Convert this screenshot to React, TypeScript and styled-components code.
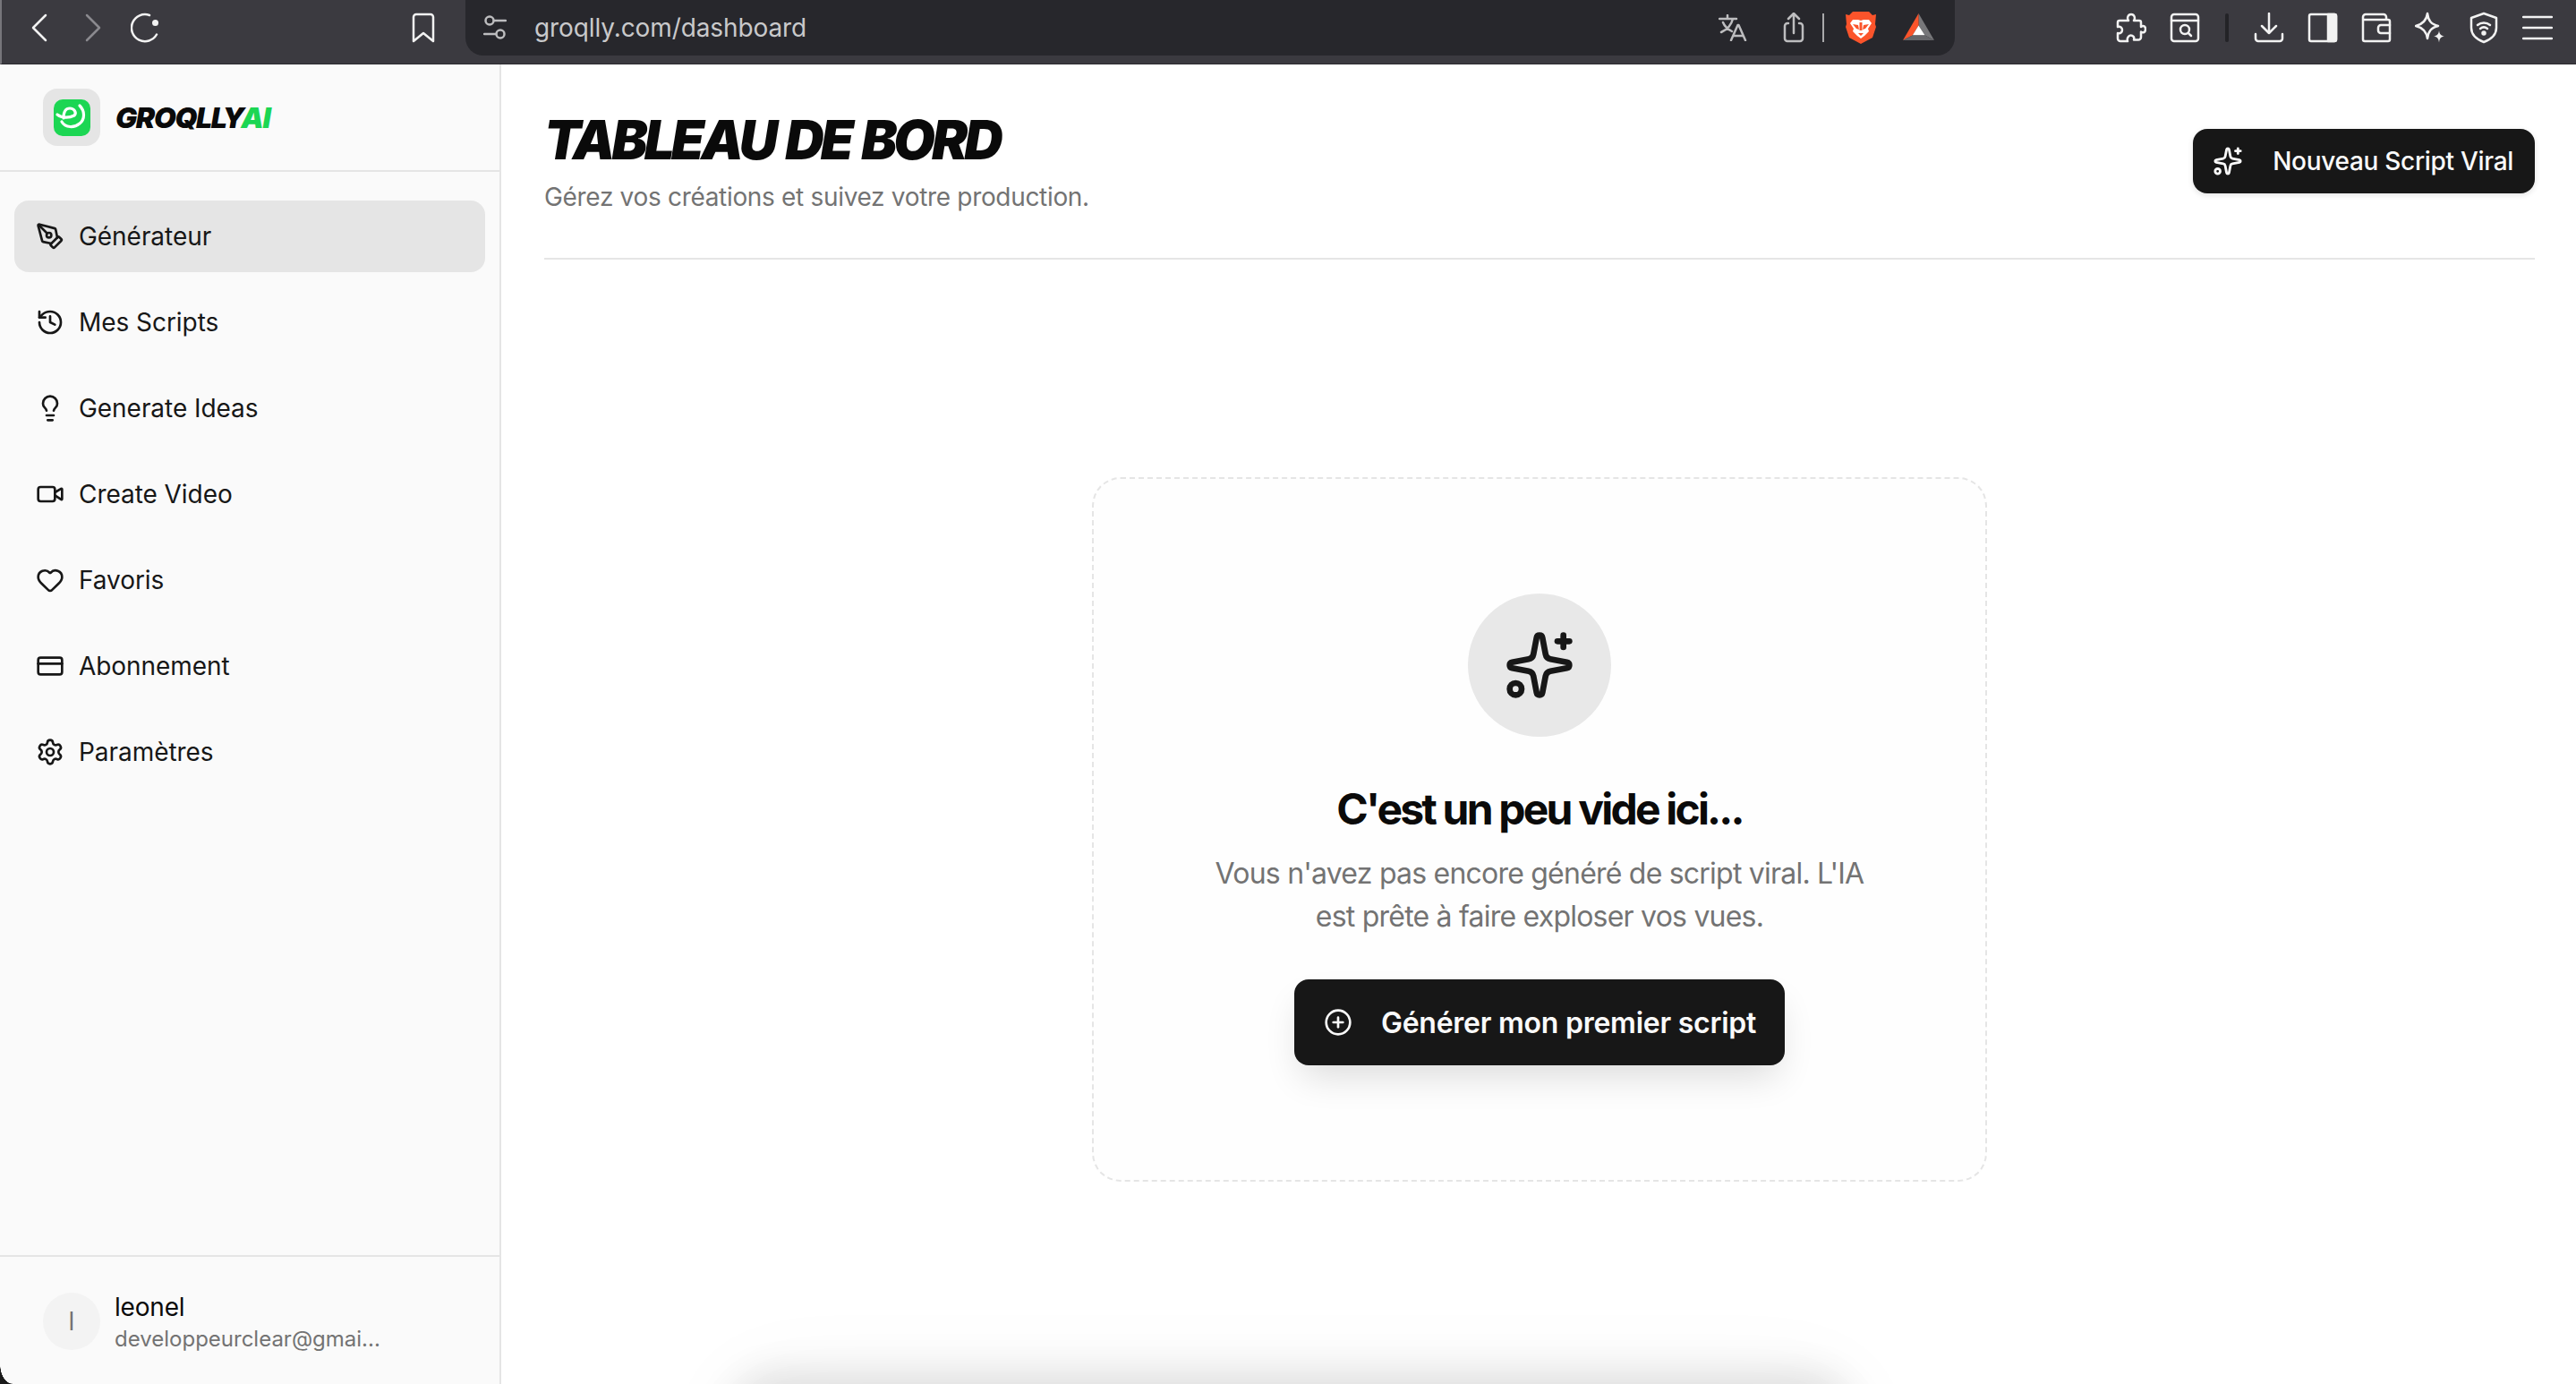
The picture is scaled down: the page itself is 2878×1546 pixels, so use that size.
import React, { FC } from 'react';
import styled, { createGlobalStyle } from 'styled-components';
import { CirclePlus, CreditCard, Heart, History, Lightbulb, PenTool, Settings, Sparkles, Video } from 'lucide-react';

const GlobalStyle = createGlobalStyle`
	html,
	body {
		margin: 0;
		padding: 0;
		background: #fff;
	}
	* {
		box-sizing: border-box;
	}
`;

const NAV_ITEMS = [
	{ label: 'Générateur', Icon: PenTool, active: true },
	{ label: 'Mes Scripts', Icon: History },
	{ label: 'Generate Ideas', Icon: Lightbulb },
	{ label: 'Create Video', Icon: Video },
	{ label: 'Favoris', Icon: Heart },
	{ label: 'Abonnement', Icon: CreditCard },
	{ label: 'Paramètres', Icon: Settings },
];

const App: FC = () => (
	<Page>
		<GlobalStyle />

		<BrowserBar>
			<HistoryControls>
				<ChromeSlot $w={64}>
					<ChromeIcon width='20' height='32' viewBox='0 0 20 32'>
						<path d='M17 2 3 16l14 14' />
					</ChromeIcon>
				</ChromeSlot>
				<ChromeSlot $w={56}>
					<ChromeIcon width='20' height='32' viewBox='0 0 20 32' $dim>
						<path d='m3 2 14 14L3 30' />
					</ChromeIcon>
				</ChromeSlot>
				<ChromeSlot $w={62}>
					<ChromeIcon width='34' height='34' viewBox='0 0 34 34'>
						<path d='M29 24.5A15 15 0 1 1 21 3' />
						<circle cx='27.5' cy='11.5' r='3.5' fill='#f2f2f2' stroke='none' />
					</ChromeIcon>
				</ChromeSlot>
			</HistoryControls>
			<BookmarkSlot>
				<ChromeIcon width='28' height='34' viewBox='0 0 28 34'>
					<path d='M3 5a3 3 0 0 1 3-3h16a3 3 0 0 1 3 3v27l-11-9-11 9z' />
				</ChromeIcon>
			</BookmarkSlot>

			<UrlBar>
				<UrlLeft>
					<ChromeIcon width='26' height='30' viewBox='0 0 26 30' $soft>
						<circle cx='7' cy='7' r='4.5' />
						<path d='M12 7h13M1 22h13' />
						<circle cx='19' cy='22' r='4.5' />
					</ChromeIcon>
					<UrlText>groqlly.com/dashboard</UrlText>
				</UrlLeft>
				<UrlRight>
					<ChromeSlot $w={68}>
						<ChromeIcon width='32' height='30' viewBox='0 0 32 30' $soft>
							<path d='M1 5h19M10 1v4M16 5c-1.500 6-6 12-13 15M5 9c2 5 6 8 10 10' />
							<path d='m14 29 7.500-17h1L30 29M17 24h10' />
						</ChromeIcon>
					</ChromeSlot>
					<ChromeSlot $w={68}>
						<ChromeIcon width='24' height='34' viewBox='0 0 24 34' $soft>
							<path d='M6 12H5a3 3 0 0 0-3 3v14a3 3 0 0 0 3 3h14a3 3 0 0 0 3-3V15a3 3 0 0 0-3-3h-1' />
							<path d='M12 23V2M6 7l6-6 6 6' />
						</ChromeIcon>
					</ChromeSlot>
					<UrlDivider />
					<ChromeSlot $w={82}>
						<svg width='36' height='38' viewBox='0 0 36 38'>
							<path d='M9 1h18l4 4 4-1-1 11 1 3-4 12-13 7-13-7L1 18l1-3L1 4l4 1z' fill='#fb542b' />
							<path d='M9 10h6l3 1 3-1h6l3 4-4 6 1 3-5 5-4 3-4-3-5-5 1-3-4-6z' fill='#fff' />
							<path d='M9 15l6 1 1 5-3-1zM27 15l-6 1-1 5 3-1zM15 25h6l-3 3zM16.500 13h3v9h-3z' fill='#fb542b' />
						</svg>
					</ChromeSlot>
					<ChromeSlot $w={48}>
						<svg width='36' height='32' viewBox='0 0 36 32'>
							<path d='M17.500 0 35 30 24.700 24.500 17.500 13.500z' fill='#77777a' />
							<path d='M17.500 0 0 30 10.700 24.500 17.500 13.500z' fill='#fb542b' />
							<path d='M17.500 13.500 24.700 24.500H10.700z' fill='#fff' />
							<path d='M0 30 10.700 24.500H24.700L35 30z' fill='#66666a' />
						</svg>
					</ChromeSlot>
				</UrlRight>
			</UrlBar>

			<Toolbar>
				<ChromeSlot $w={60}>
					<ChromeIcon width='34' height='34' viewBox='0 0 34 34'>
						<path d='M9 9h5c-2-3-.5-7 3-7s5 4 3 7h6a2 2 0 0 1 2 2v5c3-2 5-.5 5 2.500s-2 5-5 3v6a3 3 0 0 1-3 3h-5c1-3-1-5-3.500-5S12 29 13 32H5a3 3 0 0 1-3-3v-6c3 1 5-1 5-3.500S5 15 2 16v-5a2 2 0 0 1 2-2z' />
					</ChromeIcon>
				</ChromeSlot>
				<ChromeSlot $w={59}>
					<ChromeIcon width='34' height='34' viewBox='0 0 34 34'>
						<rect x='2' y='2' width='30' height='30' rx='3' />
						<path d='M2 9h30' />
						<circle cx='17' cy='19' r='5' />
						<path d='m21 23 3 3' />
					</ChromeIcon>
				</ChromeSlot>
				<ToolbarDivider />
				<ChromeSlot $w={60}>
					<ChromeIcon width='34' height='34' viewBox='0 0 34 34'>
						<path d='M17 1v22M9 15l8 8 8-8M2 24v5a3 3 0 0 0 3 3h24a3 3 0 0 0 3-3v-5' />
					</ChromeIcon>
				</ChromeSlot>
				<ChromeSlot $w={60}>
					<ChromeIcon width='34' height='34' viewBox='0 0 34 34'>
						<rect x='2' y='2' width='30' height='30' rx='2' />
						<path d='M23 2h7a2 2 0 0 1 2 2v26a2 2 0 0 1-2 2h-7z' fill='#f2f2f2' />
					</ChromeIcon>
				</ChromeSlot>
				<ChromeSlot $w={60}>
					<ChromeIcon width='34' height='34' viewBox='0 0 34 34'>
						<path d='M28 8V5a3 3 0 0 0-3-3H5a3 3 0 0 0-3 3v25a2 2 0 0 0 2 2h26a2 2 0 0 0 2-2V10a2 2 0 0 0-2-2H2' />
						<path d='M32 14H22a3 3 0 0 0-3 3v3a3 3 0 0 0 3 3h10' />
					</ChromeIcon>
				</ChromeSlot>
				<ChromeSlot $w={60}>
					<svg width='34' height='36' viewBox='0 0 34 36' fill='none'>
						<path d='M14 2c1 8 4 12 12 14-8 2-11 6-12 14-1-8-5-12-13-14 8-2 12-6 13-14z' stroke='#f2f2f2' strokeWidth='2.500' strokeLinejoin='round' />
						<path d='M27 21c.5 4 2 6 6 6.500-4 .5-5.500 2.500-6 7-.5-4.500-2-6.500-6-7 4-.5 5.500-2.500 6-6.500z' fill='#f2f2f2' />
					</svg>
				</ChromeSlot>
				<ChromeSlot $w={60}>
					<ChromeIcon width='32' height='36' viewBox='0 0 32 36'>
						<path d='M16 2 30 7v11c0 8-6 13-14 16C8 31 2 26 2 18V7z' />
						<path d='M9 15c4-3.500 10-3.500 14 0M12 19c2.500-2 5.500-2 8 0' />
						<circle cx='16' cy='24' r='1.500' fill='#f2f2f2' />
					</ChromeIcon>
				</ChromeSlot>
				<ChromeSlot $w={60}>
					<ChromeIcon width='34' height='30' viewBox='0 0 34 30'>
						<path d='M1 3h32M1 15h32M1 27h32' />
					</ChromeIcon>
				</ChromeSlot>
			</Toolbar>
		</BrowserBar>

		<Body>
			<Sidebar>
				<Brand>
					<LogoTile>
						<svg width='41' height='41' viewBox='0 0 41 41'>
							<rect width='41' height='41' rx='10' fill='#1cd653' />
							<g fill='none' stroke='#fff' strokeWidth='3.200' strokeLinecap='round'>
								<path d='M29 7c6 6 6 15 0 20-6 5-16 5-20-2' />
								<path d='M4 17c5 4 13 4 19 1 3-3 0-8-5-8-5 0-7 5-7 11' />
							</g>
						</svg>
					</LogoTile>
					<BrandName>
						GROQLLY<BrandAccent>AI</BrandAccent>
					</BrandName>
				</Brand>

				<Nav>
					{NAV_ITEMS.map(({ label, Icon, active }) => (
						<NavItem key={label} $active={active}>
							<Icon size={32} strokeWidth={2} />
							{label}
						</NavItem>
					))}
				</Nav>

				<UserRow>
					<Avatar>l</Avatar>
					<UserInfo>
						<UserName>leonel</UserName>
						<UserMail>developpeurclear@gmai...</UserMail>
					</UserInfo>
				</UserRow>
				<WindowCorner />
			</Sidebar>

			<Main>
				<Header>
					<div>
						<Title>TABLEAU DE BORD</Title>
						<Subtitle>Gérez vos créations et suivez votre production.</Subtitle>
					</div>
					<NewButton>
						<Sparkles size={34} strokeWidth={2} />
						Nouveau Script Viral
					</NewButton>
				</Header>

				<EmptyCard>
					<IconCircle>
						<Sparkles size={80} strokeWidth={2} />
					</IconCircle>
					<EmptyTitle>C'est un peu vide ici...</EmptyTitle>
					<EmptyText>Vous n'avez pas encore généré de script viral. L'IA est prête à faire exploser vos vues.</EmptyText>
					<CtaButton>
						<CirclePlus size={32} strokeWidth={2} />
						Générer mon premier script
					</CtaButton>
				</EmptyCard>

				<FloatingShadow />
			</Main>
		</Body>
	</Page>
);

const Page = styled.div`
	width: 2878px;
	height: 1546px;
	display: flex;
	flex-direction: column;
	overflow: hidden;
	font-family: Inter, 'Liberation Sans', sans-serif;
	color: #0a0a0a;
`;

const BrowserBar = styled.header`
	flex: 0 0 72px;
	display: flex;
	align-items: flex-start;
	background: #3b3a40;
	border-left: 2px solid #77767b;
	border-bottom: 1px solid #2b2a2f;
`;

const HistoryControls = styled.div`
	display: flex;
	align-items: center;
	height: 62px;
	padding-left: 10px;
`;

const BookmarkSlot = styled.div`
	display: flex;
	align-items: center;
	justify-content: center;
	width: 62px;
	height: 62px;
	margin: 0 16px 0 248px;
`;

const ChromeSlot = styled.div<{ $w: number }>`
	display: flex;
	align-items: center;
	justify-content: center;
	flex: 0 0 ${({ $w }) => `${$w}px`};
	height: 62px;
`;

const ChromeIcon = styled.svg<{ $dim?: boolean; $soft?: boolean }>`
	fill: none;
	stroke: ${({ $dim, $soft }) => ($dim ? '#8b8a8f' : $soft ? '#bdbdbf' : '#f2f2f2')};
	stroke-width: 2.5;
	stroke-linecap: round;
	stroke-linejoin: round;
`;

const UrlBar = styled.div`
	flex: 0 0 1664px;
	height: 62px;
	display: flex;
	align-items: center;
	justify-content: space-between;
	padding: 0 16px 0 20px;
	background: #27272c;
	border-radius: 0 0 20px 20px;
`;

const UrlLeft = styled.div`
	display: flex;
	align-items: center;
	gap: 31px;
`;

const UrlText = styled.span`
	font-size: 28px;
	letter-spacing: -0.1px;
	color: #c9c9cb;
`;

const UrlRight = styled.div`
	display: flex;
	align-items: center;
`;

const UrlDivider = styled.div`
	width: 2px;
	height: 32px;
	margin-left: -2px;
	background: #a9a9ab;
`;

const Toolbar = styled.div`
	display: flex;
	align-items: center;
	margin-left: 167px;
`;

const ToolbarDivider = styled.div`
	flex: 0 0 4px;
	height: 32px;
	margin: 0 15px 0 16px;
	border-radius: 2px;
	background: #232327;
`;

const Body = styled.div`
	flex: 1;
	display: flex;
	min-height: 0;
`;

const Sidebar = styled.aside`
	position: relative;
	flex: 0 0 560px;
	display: flex;
	flex-direction: column;
	background: #fafafa;
	border-right: 2px solid #e5e5e5;
`;

const Brand = styled.div`
	flex: 0 0 120px;
	display: flex;
	align-items: center;
	gap: 17px;
	padding: 0 48px;
	border-bottom: 2px solid #e5e5e5;
`;

const LogoTile = styled.div`
	display: flex;
	align-items: center;
	justify-content: center;
	width: 64px;
	height: 64px;
	border-radius: 16px;
	background: #e5e5e5;
`;

const BrandName = styled.span`
	font-size: 32px;
	font-weight: 900;
	font-style: italic;
	letter-spacing: -1.3px;
	color: #0a0a0a;
`;

const BrandAccent = styled.span`
	color: #1cd653;
`;

const Nav = styled.nav`
	flex: 1;
	display: flex;
	flex-direction: column;
	gap: 16px;
	padding: 32px 16px 0;
`;

const NavItem = styled.a<{ $active?: boolean }>`
	display: flex;
	align-items: center;
	gap: 16px;
	height: 80px;
	padding-left: 24px;
	border-radius: 16px;
	font-size: 28px;
	font-weight: 420;
	letter-spacing: -0.05px;
	color: #171717;
	background: ${({ $active }) => ($active ? '#e5e5e5' : 'transparent')};
`;

const UserRow = styled.div`
	flex: 0 0 144px;
	display: flex;
	align-items: flex-start;
	gap: 16px;
	padding: 40px 48px 0;
	border-top: 2px solid #e5e5e5;
`;

const Avatar = styled.div`
	display: flex;
	align-items: center;
	justify-content: center;
	width: 64px;
	height: 64px;
	border-radius: 50%;
	background: #f3f3f3;
	font-size: 28px;
	color: #737373;
`;

const UserInfo = styled.div`
	display: flex;
	flex-direction: column;
	margin-top: -4px;
`;

const UserName = styled.span`
	font-size: 28px;
	line-height: 40px;
	font-weight: 420;
	letter-spacing: -0.2px;
	color: #0a0a0a;
`;

const UserMail = styled.span`
	font-size: 24px;
	line-height: 32px;
	color: #737373;
`;

const WindowCorner = styled.div`
	position: absolute;
	left: 0;
	bottom: 0;
	width: 14px;
	height: 22px;
	background: radial-gradient(ellipse 14px 22px at 100% 0, transparent 97%, #1a1a1a 100%);
`;

const Main = styled.main`
	position: relative;
	flex: 1;
	padding: 48px 46px 0 48px;
	background: #fff;
	overflow: hidden;
`;

const Header = styled.div`
	display: flex;
	align-items: center;
	justify-content: space-between;
	padding-bottom: 48px;
	border-bottom: 2px solid #e5e5e5;
`;

const Title = styled.h1`
	margin: 0;
	font-size: 60px;
	line-height: 72px;
	font-weight: 900;
	font-style: italic;
	letter-spacing: -3.9px;
	word-spacing: 4px;
	color: #0a0a0a;
`;

const Subtitle = styled.p`
	margin: 8px 0 0;
	font-size: 28px;
	line-height: 40px;
	font-weight: 370;
	letter-spacing: -0.32px;
	color: #737373;
`;

const NewButton = styled.button`
	display: flex;
	align-items: center;
	gap: 33px;
	height: 72px;
	padding: 0 24px 0 22px;
	border: 0;
	border-radius: 16px;
	background: #171717;
	color: #fafafa;
	font-family: inherit;
	font-size: 28px;
	font-weight: 450;
	letter-spacing: -0.3px;
	box-shadow: 0 2px 6px rgba(0, 0, 0, 0.12);
`;

const EmptyCard = styled.section`
	display: flex;
	flex-direction: column;
	align-items: center;
	width: 1000px;
	height: 787px;
	margin: 243px auto 0;
	padding-top: 128px;
	background: #fefefe;
	border: 2px dashed #e5e5e5;
	border-radius: 32px;
`;

const IconCircle = styled.div`
	display: flex;
	align-items: center;
	justify-content: center;
	width: 160px;
	height: 160px;
	border-radius: 50%;
	background: #e8e8e8;
	color: #171717;
`;

const EmptyTitle = styled.h2`
	margin: 53px 0 0;
	font-size: 48px;
	line-height: 56px;
	font-weight: 700;
	letter-spacing: -2.8px;
	color: #0a0a0a;
`;

const EmptyText = styled.p`
	width: 744px;
	margin: 20px 0 0;
	font-size: 32px;
	line-height: 48px;
	font-weight: 375;
	letter-spacing: -0.78px;
	text-align: center;
	color: #737373;
`;

const CtaButton = styled.button`
	display: flex;
	align-items: center;
	gap: 32px;
	height: 96px;
	margin-top: 46px;
	padding: 0 32px 0 33px;
	border: 0;
	border-radius: 16px;
	background: #171717;
	color: #fafafa;
	font-family: inherit;
	font-size: 32px;
	font-weight: 580;
	letter-spacing: -0.25px;
	box-shadow: 0 20px 40px -8px rgba(0, 0, 0, 0.14);
`;

const FloatingShadow = styled.div`
	position: absolute;
	left: 270px;
	top: 1480px;
	width: 1225px;
	height: 120px;
	border-radius: 40px;
	background: #e6e6e6;
	box-shadow: 0 0 40px 20px rgba(0, 0, 0, 0.1), 0 0 100px 20px rgba(0, 0, 0, 0.04);
`;

export default App;
